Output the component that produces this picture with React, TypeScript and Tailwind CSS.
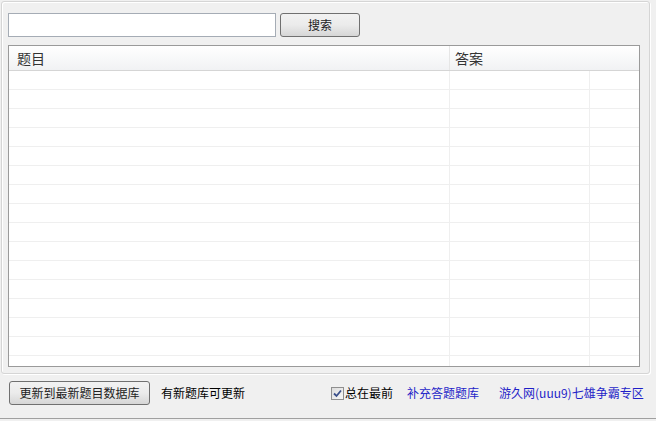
import React from "react";

const font = { fontFamily: '"Noto Sans CJK SC", "Liberation Sans", sans-serif' };

export default function App() {
  const rows = Array.from({ length: 16 });
  return (
    <div
      className="w-[656px] h-[421px] bg-[#f0f0f0] flex flex-col overflow-hidden text-[12px] text-black"
      style={font}
    >
      <div className="mt-[1px] ml-[1px] w-[649px] h-[373px] border border-[#d5d5d5] rounded-[3px] shadow-[inset_1px_1px_0_#ffffff,1px_1px_0_#ffffff] px-[6px] pt-[11px] flex flex-col">
        <div className="flex items-center gap-[4px]">
          <div className="w-[268px] h-[24px] bg-white border border-[#a5acb5]" />
          <button className="w-[80px] h-[24px] rounded-[3px] border border-[#707070] bg-gradient-to-b from-[#f2f2f2] via-[#ebebeb] to-[#d6d6d6] text-[12px] leading-none text-[#222] flex items-center justify-center">
            搜索
          </button>
        </div>
        <div className="mt-[8px] w-[632px] h-[322px] border border-[#9a9a9a] bg-white flex flex-col overflow-hidden">
          <div className="h-[25px] shrink-0 flex border-b border-[#d5d5d5] bg-gradient-to-b from-white to-[#f1f2f4] text-[14px] text-[#333]">
            <div className="w-[441px] pl-[8px] flex items-center border-r border-[#e6e6e6]">题目</div>
            <div className="flex-1 pl-[5px] flex items-center">答案</div>
          </div>
          <div className="flex-1 relative">
            {rows.map((_, i) => (
              <div key={i} className="h-[19px] flex border-b border-[#efefef]">
                <div className="w-[441px] border-r border-[#efefef]" />
                <div className="w-[140px] border-r border-[#efefef]" />
                <div className="flex-1" />
              </div>
            ))}
          </div>
        </div>
      </div>
      <div className="flex items-center mt-[7px] h-[24px]">
        <button className="ml-[9px] w-[141px] h-[24px] rounded-[3px] border border-[#707070] bg-gradient-to-b from-[#f2f2f2] via-[#ebebeb] to-[#d6d6d6] text-[12px] leading-none text-[#222] flex items-center justify-center">
          更新到最新题目数据库
        </button>
        <span className="ml-[11px]">有新题库可更新</span>
        <span className="ml-[86px] flex items-center">
          <span className="w-[13px] h-[13px] border border-[#8f8f8f] bg-gradient-to-br from-[#dcdcdc] to-[#f8f8f8] flex items-center justify-center mr-[1px]">
            <svg width="9" height="9" viewBox="0 0 9 9">
              <path d="M1 4.5 L3.5 7 L8 1.5" stroke="#3a4f8a" strokeWidth="1.8" fill="none" />
            </svg>
          </span>
          总在最前
        </span>
        <span className="ml-[14px] text-[#1f1fc8]">补充答题题库</span>
        <span className="ml-[20px] text-[#1f1fc8]">游久网(uuu9)七雄争霸专区</span>
      </div>
      <div className="mt-[13px] h-[1px] bg-[#a0a0a0]" />
    </div>
  );
}
